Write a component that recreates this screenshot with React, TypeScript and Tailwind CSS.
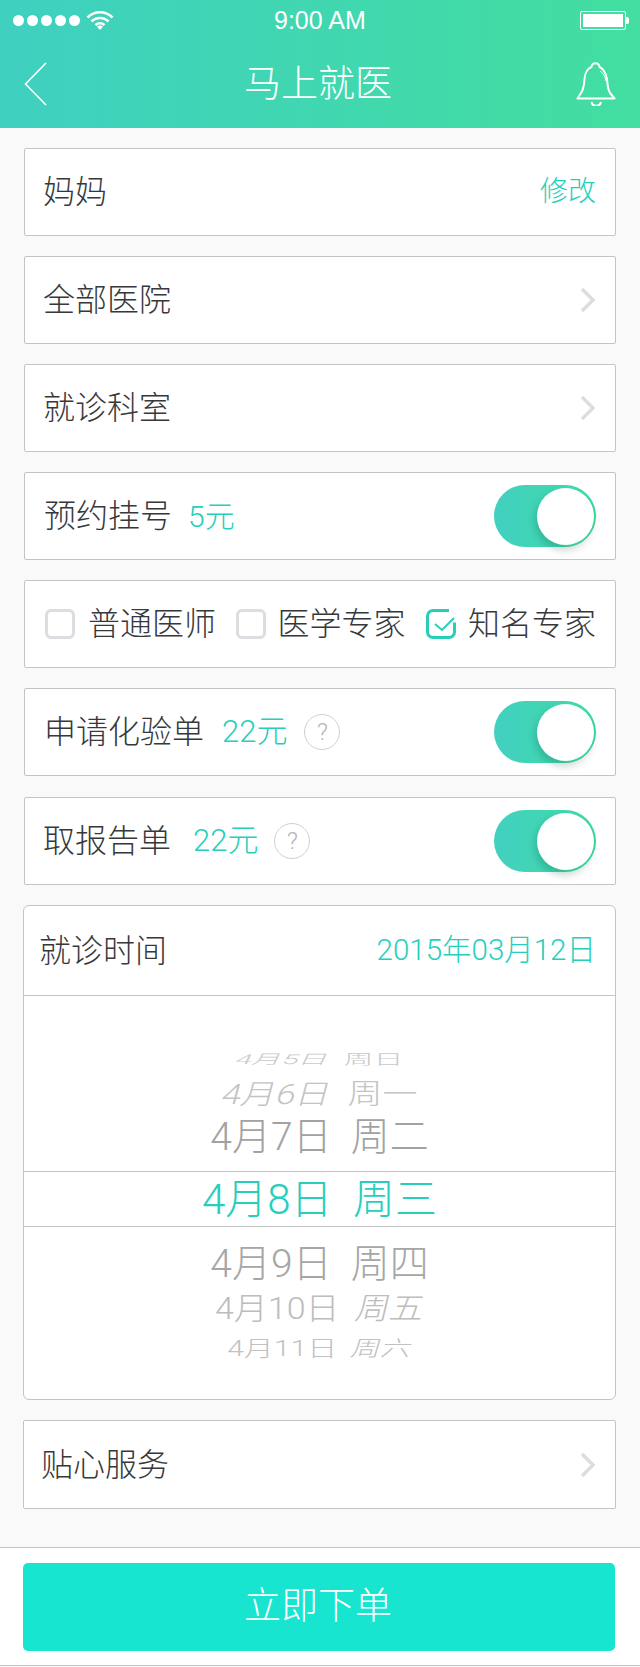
import { ReactNode } from "react";

function Card({ children, className = "" }: { children: ReactNode; className?: string }) {
  return (
    <div className={`flex h-[88px] items-center justify-between rounded-[2px] border border-[#c4c4c4] bg-white ${className}`}>
      {children}
    </div>
  );
}

function Chevron() {
  return (
    <svg width="16" height="26" viewBox="0 0 16 26" fill="none" stroke="#dcdde0" strokeWidth="3.5">
      <path d="M2 2l11 11L2 24" />
    </svg>
  );
}

function Toggle() {
  return (
    <div className="relative h-[62px] w-[102px] rounded-full bg-gradient-to-r from-[#43d0c0] to-[#3fdba6]">
      <div className="absolute top-[3px] right-[2px] h-[57px] w-[57px] rounded-full bg-white shadow-[1.5px_0.5px_0_#35d596,-4px_3px_6px_rgba(20,130,110,0.2),0_8px_6px_rgba(0,0,0,0.07)]" />
    </div>
  );
}

function Help({ className = "" }: { className?: string }) {
  return (
    <span className={`flex h-[36px] w-[36px] items-center justify-center rounded-full border border-[#cfcfcf] text-[24px] leading-none text-[#b5b5b5] ${className}`}>
      ?
    </span>
  );
}

function Check({ on = false }: { on?: boolean }) {
  if (on) {
    return (
      <svg width="30" height="30" viewBox="0 0 30 30" fill="none" stroke="#27cfbb">
        <path strokeWidth="3" d="M23 1.5H7A5.5 5.5 0 0 0 1.5 7v16A5.5 5.5 0 0 0 7 28.5h16a5.5 5.5 0 0 0 5.5-5.5v-9.5" />
        <path strokeWidth="2" d="M9 15l7 6L28 9" />
      </svg>
    );
  }
  return <span className="block h-[30px] w-[30px] rounded-[6px] border-[3px] border-[#dcdde0]" />;
}

export default function App() {
  return (
    <div className="min-h-[1667px] w-[640px] bg-[#f9f9f9] font-['Roboto','Noto_Sans_CJK_SC',sans-serif] font-light text-[#36383b]">
      {/* Header */}
      <div className="h-[128px] bg-gradient-to-r from-[#3fd0c0] to-[#43de9f] text-white">
        <div className="relative flex h-[40px] items-center justify-between pr-[11px] pl-[13px]">
          <div className="flex items-center gap-[3px]">
            {[0, 1, 2, 3, 4].map((i) => (
              <span key={i} className="h-[11px] w-[11px] rounded-full bg-white" />
            ))}
            <svg className="ml-[3px]" width="28" height="20" viewBox="0 0 28 20" fill="none" stroke="white" strokeWidth="2.6">
              <path d="M1.5 7.5a17.5 17.5 0 0 1 25 0" />
              <path d="M5.5 11.5a12 12 0 0 1 17 0" />
              <path d="M9.5 15a6.5 6.5 0 0 1 9 0" />
              <path d="M14 20l-3-3.2a4.2 4.2 0 0 1 6 0z" fill="white" stroke="none" />
            </svg>
          </div>
          <span className="absolute left-[274px] font-['Liberation_Sans',sans-serif] text-[25px] font-normal leading-none">9:00 AM</span>
          <div className="flex items-center">
            <div className="h-[19px] w-[46px] rounded-[2px] border border-white p-[2px]">
              <div className="h-full w-full bg-white" />
            </div>
            <span className="h-[7px] w-[3px] rounded-r-[2px] bg-white" />
          </div>
        </div>
        <div className="flex h-[88px] items-center justify-between pr-[24px] pl-[24px]">
          <div className="w-[36px]">
            <svg width="23" height="44" viewBox="0 0 23 44" fill="none" stroke="white" strokeWidth="1.6">
              <path d="M22 1L1.5 22 22 43" />
            </svg>
          </div>
          <h1 className="text-[37px] font-light leading-none">马上就医</h1>
          <svg width="40" height="44" viewBox="0 0 40 44" fill="none" stroke="white" strokeWidth="2">
            <path d="M1.5 36.5h37L34 31c-2.5-4-2.5-9-3-14-1-7-5-11-7.500-12-.5-5-7.500-5-8 0-3 1-6.500 5-7 12-.5 5-.5 10-3.500 14z" strokeLinejoin="round" />
            <path d="M15.5 40c1 5 8.500 5 9.500 0" />
            <path d="M24 9c3 2 5 5 6 10" strokeWidth="1" />
          </svg>
        </div>
      </div>

      {/* Form */}
      <div className="flex flex-col gap-5 px-6 pt-5">
        <Card className="pr-[19px] pl-[18px]">
          <span className="text-[32px]">妈妈</span>
          <span className="text-[28px] text-[#27cfbb]">修改</span>
        </Card>
        <Card className="pr-[19px] pl-[18px]">
          <span className="text-[32px]">全部医院</span>
          <Chevron />
        </Card>
        <Card className="pr-[19px] pl-[18px]">
          <span className="text-[32px]">就诊科室</span>
          <Chevron />
        </Card>
        <Card className="pr-[19px] pl-[19px]">
          <div className="flex items-center gap-[16px]">
            <span className="text-[32px]">预约挂号</span>
            <span className="text-[30px] text-[#27cfbb]">5元</span>
          </div>
          <Toggle />
        </Card>
        <Card className="pr-[19px] pl-[20px]">
          <div className="flex items-center gap-[13px]">
            <Check />
            <span className="text-[32px]">普通医师</span>
          </div>
          <div className="flex items-center gap-[11px]">
            <Check />
            <span className="text-[32px]">医学专家</span>
          </div>
          <div className="flex items-center gap-[12px]">
            <Check on />
            <span className="text-[32px]">知名专家</span>
          </div>
        </Card>
        <Card className="pr-[19px] pl-[19px]">
          <div className="flex items-center gap-[18px]">
            <span className="text-[32px]">申请化验单</span>
            <span className="text-[31px] text-[#27cfbb]">22元</span>
            <Help className="-ml-px" />
          </div>
          <Toggle />
        </Card>
        <Card className="mt-px pr-[19px] pl-[18px]">
          <div className="flex items-center gap-[22px]">
            <span className="text-[32px]">取报告单</span>
            <span className="text-[31px] text-[#27cfbb]">22元</span>
            <Help className="-ml-[6px]" />
          </div>
          <Toggle />
        </Card>

        {/* Visit time */}
        <div className="-ml-px h-[495px] overflow-hidden rounded-[6px] border border-[#c4c4c4] bg-white">
          <div className="flex h-[90px] items-center justify-between border-b border-[#c4c4c4] pr-[19px] pl-[15px]">
            <span className="text-[32px]">就诊时间</span>
            <span className="text-[29.5px] text-[#27cfbb]">2015年03月12日</span>
          </div>
          <div className="flex flex-col items-center pt-[44px] whitespace-pre">
            <div className="mt-[2px] flex h-[34px] scale-y-[.45] items-center text-[30px] text-[#c9c9c9]">
              <span className="-skew-x-12">4月5日</span>
              <span>  周日</span>
            </div>
            <div className="-mt-[2px] flex h-[42px] scale-y-[.8] items-center text-[35px] text-[#c4c4c4]">
              <span className="-skew-x-12">4月6日</span>
              <span>  周一</span>
            </div>
            <div className="flex h-[42px] items-center text-[39px] text-[#a2a2a2]">4月7日  周二</div>
            <div className="mt-[13px] flex h-[56px] w-full items-center justify-center border-y border-[#c4c4c4] pt-px text-[42px] text-[#27cfbb]">
              4月8日  周三
            </div>
            <div className="mt-[16px] flex h-[42px] items-center text-[39px] text-[#a6a6a6]">4月9日  周四</div>
            <div className="mt-[2px] flex h-[42px] scale-y-[.9] items-center text-[34px] text-[#bdbdbd]">
              <span>4月10日</span>
              <span className="-skew-x-12">  周五</span>
            </div>
            <div className="mt-[2px] flex h-[34px] scale-y-[.72] items-center text-[30px] text-[#c2c2c2]">
              <span>4月11日</span>
              <span className="-skew-x-12">  周六</span>
            </div>
          </div>
        </div>

        <Card className="-ml-px h-[89px] pr-[19px] pl-[17px]">
          <span className="text-[32px]">贴心服务</span>
          <Chevron />
        </Card>
      </div>

      {/* Footer */}
      <div className="mt-[38px] h-[119px] border-y border-[#c4c4c4] bg-white px-[23px] pt-[15px]">
        <button className="h-[88px] w-[592px] rounded-[5px] bg-[#17e5cf] pr-[2px] text-[37px] font-light text-white">立即下单</button>
      </div>
    </div>
  );
}
